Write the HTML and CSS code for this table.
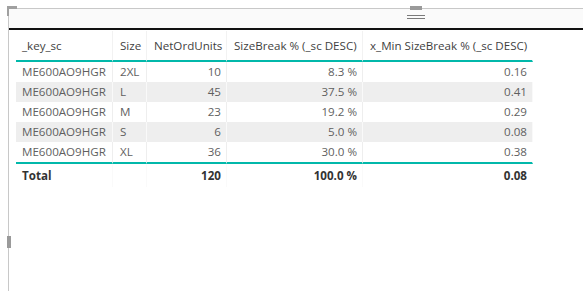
FILE: index.html
```html
<!DOCTYPE html>
<html>
<head>
<meta charset="utf-8">
<link rel="stylesheet" href="styles.css">
</head>
<body>
<div class="visual">
  <div class="corner"></div>
  <div class="side-handle"></div>
  <div class="vheader">
    <div class="grip"><span class="grip-line"></span><span class="grip-line"></span></div>
  </div>
  <table class="grid">
    <colgroup>
      <col class="c1"><col class="c2"><col class="c3"><col class="c4"><col class="c5">
    </colgroup>
    <thead>
      <tr>
        <th>_key_sc</th>
        <th>Size</th>
        <th>NetOrdUnits</th>
        <th>SizeBreak % (_sc DESC)</th>
        <th>x_Min SizeBreak % (_sc DESC)</th>
      </tr>
    </thead>
    <tbody>
      <tr><td>ME600AO9HGR</td><td>2XL</td><td class="num">10</td><td class="num">8.3 %</td><td class="num">0.16</td></tr>
      <tr class="alt"><td>ME600AO9HGR</td><td>L</td><td class="num">45</td><td class="num">37.5 %</td><td class="num">0.41</td></tr>
      <tr><td>ME600AO9HGR</td><td>M</td><td class="num">23</td><td class="num">19.2 %</td><td class="num">0.29</td></tr>
      <tr class="alt"><td>ME600AO9HGR</td><td>S</td><td class="num">6</td><td class="num">5.0 %</td><td class="num">0.08</td></tr>
      <tr class="last"><td>ME600AO9HGR</td><td>XL</td><td class="num">36</td><td class="num">30.0 %</td><td class="num">0.38</td></tr>
    </tbody>
    <tfoot>
      <tr><td>Total</td><td></td><td class="num">120</td><td class="num">100.0 %</td><td class="num">0.08</td></tr>
    </tfoot>
  </table>
</div>
</body>
</html>
```
FILE: styles.css
```css
html, body {
  margin: 0;
  padding: 0;
  background: #ffffff;
}
body {
  font-family: "Open Sans", "Noto Sans", "Liberation Sans", sans-serif;
  width: 583px;
  height: 291px;
  overflow: hidden;
}
.visual {
  position: relative;
  margin: 8px 0 0 8px;
  height: 283px;
  border-left: 1px solid #c8c8c8;
  border-top: 1px solid #c8c8c8;
  box-sizing: border-box;
}
.corner {
  position: absolute;
  left: -2px;
  top: -3px;
  width: 10px;
  height: 10px;
  box-sizing: border-box;
  border-left: 5px solid #a0a0a0;
  border-top: 5px solid #a0a0a0;
}
.side-handle {
  position: absolute;
  left: -2px;
  top: 227px;
  width: 4px;
  height: 12px;
  background: #9a9a9a;
}
.vheader {
  position: relative;
  height: 19px;
  background: #fafafa;
  border-bottom: 2px solid #111111;
}
.grip {
  position: absolute;
  left: 398px;
  top: -3px;
  width: 18px;
  display: flex;
  flex-direction: column;
  align-items: center;
}
.grip::before {
  content: "";
  display: block;
  width: 12px;
  height: 4px;
  background: #9a9a9a;
  margin-bottom: 5px;
}
.grip-line {
  display: block;
  width: 18px;
  height: 1px;
  background: #7a7a7a;
  margin-bottom: 2px;
}
.grid {
  margin: 1px 0 0 7px;
  border-collapse: separate;
  border-spacing: 0;
  table-layout: fixed;
  width: 517px;
  font-size: 11.6px;
  color: #5f5f5f;
}
.c1 { width: 97px; }
.c2 { width: 34px; }
.c3 { width: 80px; }
.c4 { width: 136px; }
.c5 { width: 170px; }
.grid th {
  height: 29px;
  padding: 0 4px 0 7px;
  text-align: left;
  font-weight: normal;
  color: #3f3f3f;
  white-space: nowrap;
  overflow: visible;
  border-right: 1px solid #f2f2f2;
  border-bottom: 2px solid #01b8aa;
  vertical-align: middle;
}
.grid th:first-child { padding-left: 6px; }
.grid td {
  height: 20px;
  padding: 0 5px 0 7px;
  white-space: nowrap;
  border-right: 1px solid #eeeeee;
  vertical-align: middle;
  line-height: 20px;
}
.grid td:first-child { padding-left: 6px; }
.grid th:last-child, .grid td:last-child { border-right: 1px solid transparent; }
.grid tr.alt td {
  background: #eeeeee;
  border-right-color: #f9f9f9;
}
.grid tr.last td {
  border-bottom: 2px solid #01b8aa;
}
.grid .num { text-align: right; }
.grid tfoot td {
  height: 23px;
  font-weight: bold;
  color: #333333;
  border-right-color: #fafafa;
}
```
